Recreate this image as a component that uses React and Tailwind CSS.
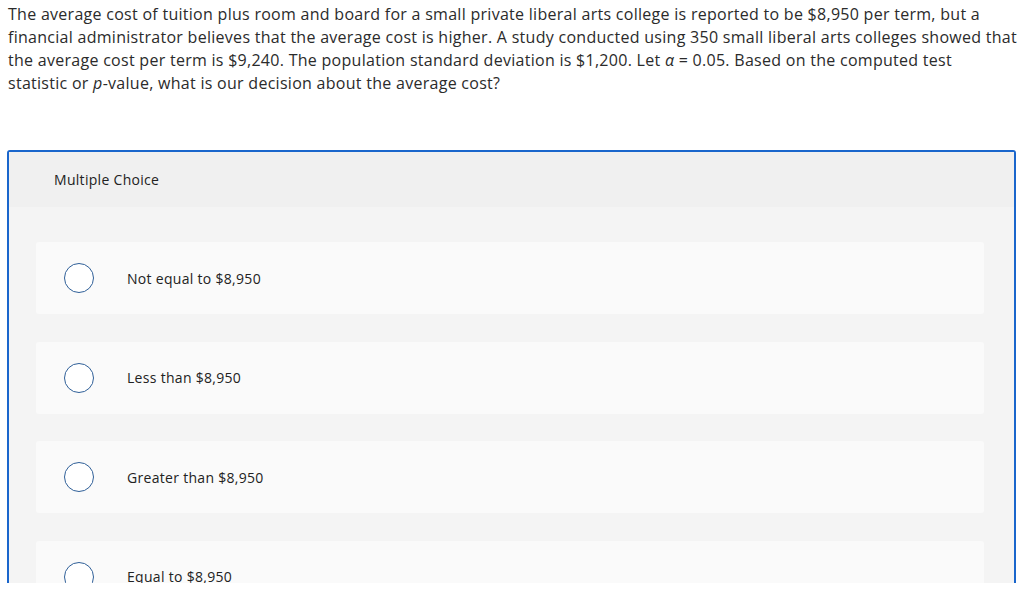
export default function App() {
  const options = ["Not equal to $8,950", "Less than $8,950", "Greater than $8,950", "Equal to $8,950"];
  return (
    <div className="w-[1024px] h-[583px] overflow-hidden bg-white text-[#333]" style={{ fontFamily: "'Open Sans', sans-serif" }}>
      <p className="pl-[8px] pr-[4px] pt-[3px] text-[16px] leading-[23px] tracking-[0.28px] text-[#2b2b2b]">
        The average cost of tuition plus room and board for a small private liberal arts college is reported to be $8,950 per term, but a financial administrator believes that the average cost is higher. A study conducted using 350 small liberal arts colleges showed that the average cost per term is $9,240. The population standard deviation is $1,200. Let <i>α</i> = 0.05. Based on the computed test<br />statistic or <i>p</i>-value, what is our decision about the average cost?
      </p>
      <div className="mt-[55px] ml-[7px] w-[1009px] border-2 border-[#1a66cc] rounded-[3px] bg-[#f4f4f4]">
        <div className="h-[55px] bg-[#f0f0f0] pl-[45px] flex items-center text-[14px] tracking-[0.3px] text-[#222]">Multiple Choice</div>
        <div className="pt-[35px] pl-[27px] pr-[30px] flex flex-col gap-[27.5px]">
          {options.map((o) => (
            <div key={o} className="h-[72px] bg-[#fafafa] rounded-[3px] flex items-center pl-[28px]">
              <div className="w-[30px] h-[30px] rounded-full border-[1.5px] border-[#2f5f98] bg-white shrink-0"></div>
              <span className="ml-[33px] text-[14px] tracking-[0.3px] text-[#222]">{o}</span>
            </div>
          ))}
        </div>
      </div>
    </div>
  );
}
